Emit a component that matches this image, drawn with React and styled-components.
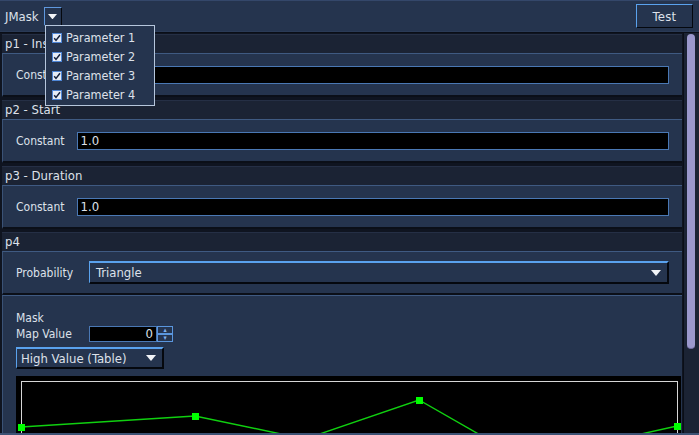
import React from 'react'
import styled, { createGlobalStyle } from 'styled-components'

//-----------------------------------------------------------------------------
// Data
//-----------------------------------------------------------------------------
const params = ['Parameter 1', 'Parameter 2', 'Parameter 3', 'Parameter 4']

const constantSections = [
  { title: 'p1 - Instrument', value: '1' },
  { title: 'p2 - Start', value: '1.0' },
  { title: 'p3 - Duration', value: '1.0' }
]

// table points, in canvas coordinates
const tablePoints = [[5, 51], [179, 40], [289, 63], [403, 24], [508, 84], [661, 50]]
const handles = [[5, 51], [179, 40], [403, 24], [661, 50]]

//-----------------------------------------------------------------------------
// Component
//-----------------------------------------------------------------------------
const DownArrow = ({ w = 10 }) => (
  <svg width={w} height={w * 0.6} viewBox="0 0 10 6">
    <path d="M0 0 L10 0 L5 6 Z" fill="#f2f4f8" />
  </svg>
)

const CheckBox = () => (
  <svg width="10" height="10" viewBox="0 0 10 10">
    <rect x="0.5" y="0.5" width="9" height="9" fill="#e6ecf6" stroke="#4f86d6" />
    <path d="M2.2 5.2 L4 7.4 L8 2.2" stroke="#15203a" strokeWidth="1.5" fill="none" />
  </svg>
)

const App = () => {
  return (
    <Frame>
      <GlobalStyle />
      <TopBar>
        <Title>JMask</Title>
        <MenuButton><DownArrow w={9} /></MenuButton>
        <Spacer />
        <TestButton>Test</TestButton>
      </TopBar>

      <Main>
        <Content>
          {constantSections.map(s => (
            <Section key={s.title}>
              <Header>{s.title}</Header>
              <Body>
                <Label>Constant</Label>
                <Field>{s.value}</Field>
              </Body>
            </Section>
          ))}
          <Section>
            <Header>p4</Header>
            <Body>
              <Label $w={61}>Probability</Label>
              <Select>
                <span>Triangle</span>
                <DownArrow />
              </Select>
            </Body>
            <MaskBody>
              <Label>Mask</Label>
              <MapRow>
                <Label $w={61}>Map Value</Label>
                <Spinner>
                  <SpinField>0</SpinField>
                  <SpinButtons>
                    <SpinButton>▴</SpinButton>
                    <SpinButton>▾</SpinButton>
                  </SpinButtons>
                </Spinner>
              </MapRow>
              <SmallSelect>
                <span>High Value (Table)</span>
                <DownArrow />
              </SmallSelect>
              <Canvas>
                <svg width="665" height="120">
                  <rect x="5.5" y="5.5" width="656" height="140" fill="none" stroke="#d6d6d6" />
                  <polyline
                    points={tablePoints.map(p => p.join(',')).join(' ')}
                    fill="none"
                    stroke="#10d010"
                    strokeWidth="1.4" />
                  {handles.map(([x, y]) => (
                    <rect key={x} x={x - 3} y={y - 3} width="7" height="7" fill="#00ff00" />
                  ))}
                </svg>
              </Canvas>
            </MaskBody>
          </Section>
        </Content>
        <ScrollTrack>
          <ScrollThumb />
        </ScrollTrack>
      </Main>

      <Popup>
        {params.map(p => (
          <PopupItem key={p}>
            <CheckBox />
            <span>{p}</span>
          </PopupItem>
        ))}
      </Popup>
      <BottomEdge />
    </Frame>
  )
}

//-----------------------------------------------------------------------------
// Styled Components
//-----------------------------------------------------------------------------
const GlobalStyle = createGlobalStyle`
  body {
    margin: 0;
    background: #141b2a;
  }
`

const Frame = styled.div`
  position: relative;
  width: 699px;
  height: 435px;
  overflow: hidden;
  background: #121827;
  font-family: "DejaVu Sans Condensed", "DejaVu Sans", "Liberation Sans", sans-serif;
  font-stretch: condensed;
  font-size: 12px;
  color: #dde1ea;
`

const TopBar = styled.div`
  height: 32px;
  box-sizing: border-box;
  display: flex;
  align-items: center;
  padding: 0 6px 0 5px;
  gap: 5px;
  background: #25344e;
  border-top: 1px solid #34476a;
  border-bottom: 1px solid #2a3a56;
  font-size: 13px;
`

const Title = styled.span`
  line-height: 1;
`

const MenuButton = styled.div`
  width: 18px;
  height: 19px;
  box-sizing: border-box;
  display: flex;
  align-items: center;
  justify-content: center;
  background: #25344e;
  border-top: 1px solid #5f98de;
  border-left: 1px solid #5f98de;
  border-right: 1px solid #05080e;
  border-bottom: 1px solid #05080e;
  margin-top: 1px;
`

const Spacer = styled.div`
  flex: 1;
`

const TestButton = styled.div`
  width: 57px;
  height: 24px;
  box-sizing: border-box;
  display: flex;
  align-items: center;
  justify-content: center;
  background: #25344e;
  border-top: 1px solid #5aa2ee;
  border-left: 1px solid #5aa2ee;
  border-right: 1px solid #05080e;
  border-bottom: 1px solid #05080e;
  letter-spacing: 0.3px;
`

const Main = styled.div`
  display: flex;
  height: 403px;
  border-top: 1px solid #0a0e17;
`

const Content = styled.div`
  width: 683px;
  box-sizing: border-box;
  padding: 1px 1px 0 2px;
  display: flex;
  flex-direction: column;
  background: #0f1420;
`

const Section = styled.div`
  display: flex;
  flex-direction: column;
  margin-bottom: 3px;
`

const Header = styled.div`
  height: 19px;
  box-sizing: border-box;
  padding: 0 3px;
  line-height: 18px;
  font-size: 13px;
  background: #1b2334;
  border-top: 1px solid #252f45;
`

const Body = styled.div`
  height: 44px;
  box-sizing: border-box;
  display: flex;
  align-items: center;
  gap: 12px;
  padding: 0 13px 0 13px;
  background: #25344e;
  border-top: 1px solid #3f5a82;
  border-left: 1px solid #3a5276;
  border-bottom: 2px solid #0b0f18;
`

const Label = styled.span`
  white-space: nowrap;
  ${p => p.$w && `width: ${p.$w}px;`}
`

const Field = styled.div`
  flex: 1;
  height: 18px;
  box-sizing: border-box;
  padding: 0 3px;
  line-height: 16px;
  font-size: 13px;
  background: #000;
  border: 1px solid #4a78b4;
`

const Select = styled.div`
  flex: 1;
  height: 23px;
  box-sizing: border-box;
  display: flex;
  align-items: center;
  justify-content: space-between;
  padding: 0 6px 0 6px;
  font-size: 13px;
  background: #25344e;
  border-top: 2px solid #5aa2ee;
  border-left: 1px solid #5aa2ee;
  border-right: 2px solid #05080e;
  border-bottom: 2px solid #05080e;
`

const MaskBody = styled.div`
  display: flex;
  flex-direction: column;
  padding: 15px 1px 0 13px;
  height: 200px;
  background: #25344e;
  border-top: 1px solid #3f5a82;
  border-left: 1px solid #3a5276;
`

const MapRow = styled.div`
  display: flex;
  align-items: center;
  gap: 12px;
  margin-top: 1px;
`

const Spinner = styled.div`
  display: flex;
  height: 16px;
`

const SpinField = styled.div`
  width: 68px;
  box-sizing: border-box;
  padding: 0 3px;
  text-align: right;
  line-height: 14px;
  font-size: 13px;
  background: #000;
  border: 1px solid #4a78b4;
`

const SpinButtons = styled.div`
  display: flex;
  flex-direction: column;
  width: 16px;
`

const SpinButton = styled.div`
  height: 8px;
  box-sizing: border-box;
  display: flex;
  align-items: center;
  justify-content: center;
  font-size: 7px;
  line-height: 1;
  color: #7fb0ee;
  background: #25344e;
  border: 1px solid #5a96de;
`

const SmallSelect = styled(Select)`
  flex: none;
  width: 148px;
  height: 22px;
  margin: 5px 0 0 0;
  padding: 0 6px 0 4px;
`

const Canvas = styled.div`
  margin-top: 7px;
  height: 120px;
  background: #000;
`

const ScrollTrack = styled.div`
  width: 16px;
  box-sizing: border-box;
  padding: 1px 4px 0 3px;
  background: #1b2334;
  border-left: 1px solid #0a0e17;
`

const ScrollThumb = styled.div`
  height: 314px;
  border-radius: 4px;
  background: #9b98cc;
  border-bottom: 1px solid #6e6a9c;
`

const Popup = styled.div`
  position: absolute;
  left: 45px;
  top: 25px;
  width: 110px;
  height: 81px;
  box-sizing: border-box;
  padding: 2px 0 0 6px;
  background: #25344e;
  border: 1px solid #b6c6dc;
  display: flex;
  flex-direction: column;
  font-size: 12.5px;
`

const PopupItem = styled.div`
  height: 19px;
  display: flex;
  align-items: center;
  gap: 4px;
`

const BottomEdge = styled.div`
  position: absolute;
  left: 0;
  right: 0;
  bottom: 0;
  height: 2px;
  background: #3c5274;
`

export default App
